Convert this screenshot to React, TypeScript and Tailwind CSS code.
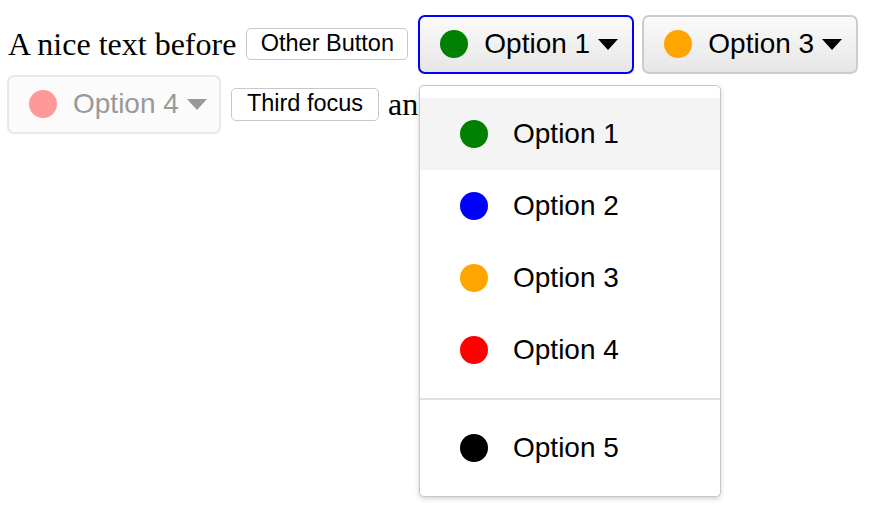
import React from "react";

const Caret = ({ color }: { color: string }) => (
  <svg width="20" height="11" viewBox="0 0 20 11" className="shrink-0">
    <path d="M0 0 L20 0 L10 11 Z" fill={color} />
  </svg>
);

const Dot = ({ color }: { color: string }) => (
  <span className="inline-block w-[28px] h-[28px] rounded-full shrink-0" style={{ backgroundColor: color }} />
);

const sans = { fontFamily: '"Liberation Sans", Arial, sans-serif' };
const serif = { fontFamily: '"Liberation Serif", "Times New Roman", serif' };

function SelectButton({
  color,
  label,
  variant,
  className,
}: {
  color: string;
  label: string;
  variant: "focus" | "normal" | "disabled";
  className?: string;
}) {
  const border =
    variant === "focus"
      ? "border-[#0000ff]"
      : variant === "disabled"
      ? "border-[#e8e8e8]"
      : "border-[#cccccc]";
  const bg =
    variant === "disabled"
      ? "bg-[#fbfbfb]"
      : "bg-gradient-to-b from-[#fbfbfb] to-[#e6e6e6]";
  const text = variant === "disabled" ? "text-[#999999]" : "text-black";
  const width = variant === "disabled" ? "w-[214px]" : "w-[216px]";
  return (
    <div
      className={`flex items-center h-[59px] ${width} shrink-0 border-2 ${border} ${bg} rounded-[7px] pl-[20px] ${text} text-[28px] ${className ?? ""}`}
      style={sans}
    >
      <Dot color={variant === "disabled" ? "#ff9999" : color} />
      <span className="ml-[16px] leading-none">{label}</span>
      <span className="ml-[8px] flex items-center">
        <Caret color={variant === "disabled" ? "#999999" : "#000000"} />
      </span>
    </div>
  );
}

const items = [
  { c: "#008000", l: "Option 1", active: true },
  { c: "#0000ff", l: "Option 2" },
  { c: "#ffa500", l: "Option 3" },
  { c: "#ff0000", l: "Option 4" },
];

export default function App() {
  return (
    <div className="relative w-[880px] h-[528px] bg-white overflow-hidden">
      <div className="pt-[14px]">
        <div className="flex items-center h-[60px]">
          <span className="ml-[8px] text-[32px] text-black whitespace-nowrap" style={serif}>
            A nice text before
          </span>
          <button
            className="ml-[10px] h-[32px] w-[162px] border border-[#c8c8c8] rounded-[5px] bg-white text-[23.5px] text-black flex items-center justify-center"
            style={sans}
          >
            Other Button
          </button>
          <SelectButton className="ml-[10px]" color="#008000" label="Option 1" variant="focus" />
          <SelectButton className="ml-[8px]" color="#ffa500" label="Option 3" variant="normal" />
        </div>
        <div className="flex items-center h-[60px]">
          <SelectButton className="ml-[7px]" color="#ff0000" label="Option 4" variant="disabled" />
          <button
            className="ml-[10px] h-[33px] w-[148px] border border-[#c8c8c8] rounded-[5px] bg-white text-[23.5px] text-black flex items-center justify-center"
            style={sans}
          >
            Third focus
          </button>
          <span className="ml-[9px] text-[32px] text-black whitespace-nowrap" style={serif}>
            and after
          </span>
        </div>
      </div>

      <div
        className="absolute left-[419px] top-[85px] w-[302px] bg-white border border-[#c8c8c8] rounded-[5px] shadow-[0_2px_5px_rgba(0,0,0,0.18)] py-[12px] text-[28px] text-black"
        style={sans}
      >
        {items.map((it) => (
          <div
            key={it.l}
            className={`flex items-center h-[72px] pl-[40px] ${it.active ? "bg-[#f4f4f4]" : ""}`}
          >
            <Dot color={it.c} />
            <span className="ml-[25px] leading-none">{it.l}</span>
          </div>
        ))}
        <div className="my-[12px] h-[2px] bg-[#e0e0e0]" />
        <div className="flex items-center h-[72px] pl-[40px]">
          <Dot color="#000000" />
          <span className="ml-[25px] leading-none">Option 5</span>
        </div>
      </div>
    </div>
  );
}
